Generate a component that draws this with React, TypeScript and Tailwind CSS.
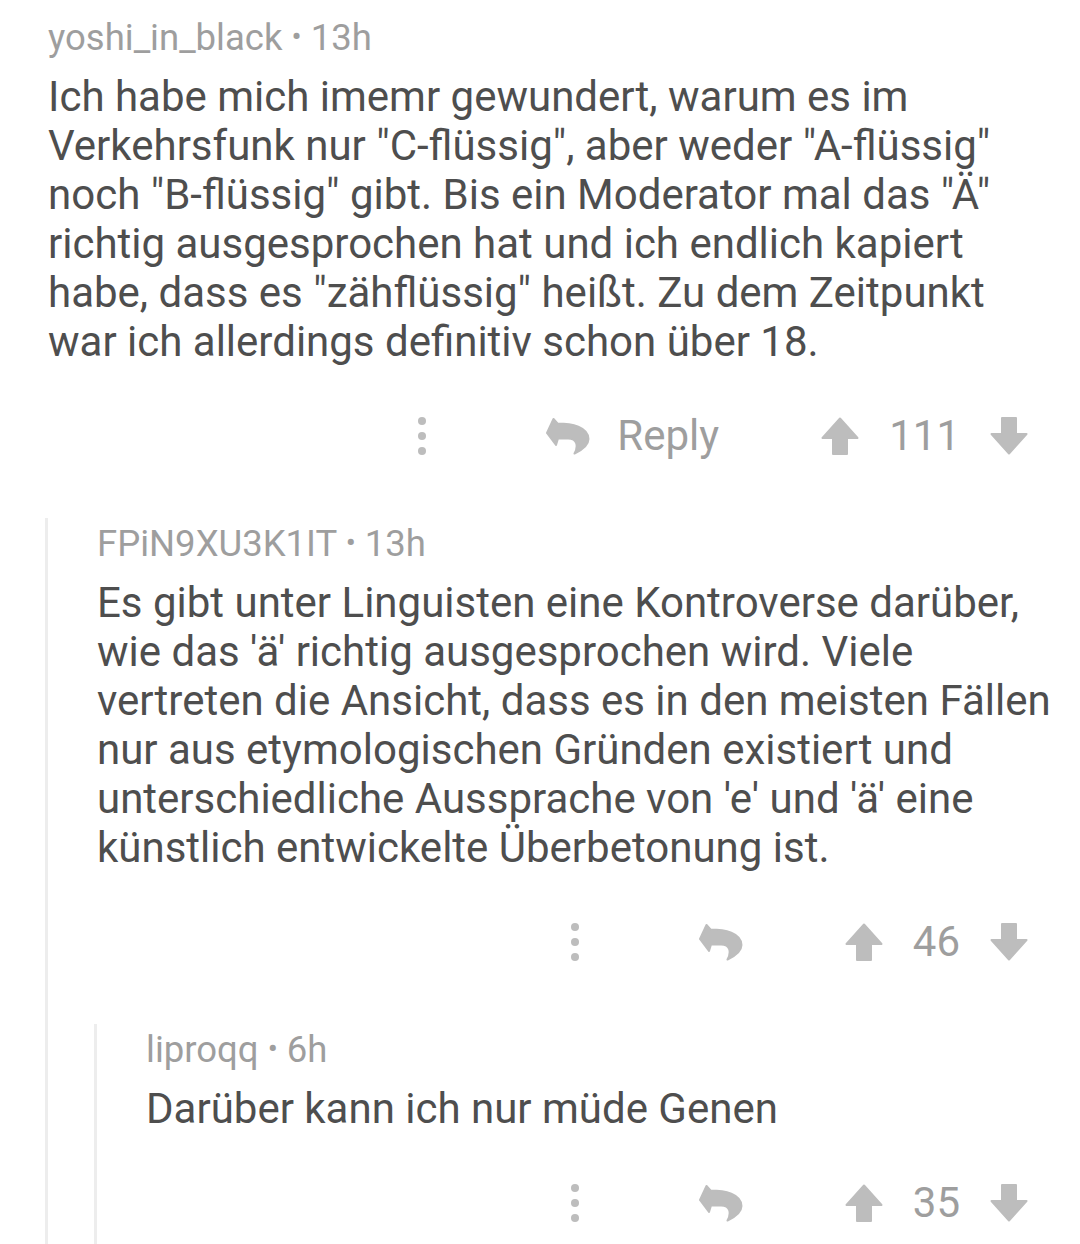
import React from "react";

type Comment = {
  author: string;
  age: string;
  lines: string[];
  score: number;
  replyLabel?: boolean;
  children?: Comment[];
};

const thread: Comment = {
  author: "yoshi_in_black",
  age: "13h",
  lines: [
    "Ich habe mich imemr gewundert, warum es im",
    "Verkehrsfunk nur \"C-flüssig\", aber weder \"A-flüssig\"",
    "noch \"B-flüssig\" gibt. Bis ein Moderator mal das \"Ä\"",
    "richtig ausgesprochen hat und ich endlich kapiert",
    "habe, dass es \"zähflüssig\" heißt. Zu dem Zeitpunkt",
    "war ich allerdings definitiv schon über 18.",
  ],
  score: 111,
  replyLabel: true,
  children: [
    {
      author: "FPiN9XU3K1IT",
      age: "13h",
      lines: [
        "Es gibt unter Linguisten eine Kontroverse darüber,",
        "wie das 'ä' richtig ausgesprochen wird. Viele",
        "vertreten die Ansicht, dass es in den meisten Fällen",
        "nur aus etymologischen Gründen existiert und",
        "unterschiedliche Aussprache von 'e' und 'ä' eine",
        "künstlich entwickelte Überbetonung ist.",
      ],
      score: 46,
      children: [
        {
          author: "liproqq",
          age: "6h",
          lines: ["Darüber kann ich nur müde Genen"],
          score: 35,
        },
      ],
    },
  ],
};

function ReplyIcon() {
  return (
    <svg width="44" height="38" viewBox="0 0 44 38" className="shrink-0">
      <path
        d="M1 16 L7.5 2 L11.5 6.5 C26 6.5 42 10 42.5 22 C42.5 28 36 33 28.5 36.5 C32 30 32 21.5 22 21.5 L12 21.5 L10 28 Z"
        fill="#bdbdbd"
        stroke="#bdbdbd"
        strokeWidth="2"
        strokeLinejoin="round"
      />
    </svg>
  );
}

function ArrowUp() {
  return (
    <svg width="38" height="38" viewBox="0 0 38 38" className="shrink-0">
      <polygon
        points="19,1.5 36.5,21 26,21 26,37 12,37 12,21 1.5,21"
        fill="#bdbdbd"
        stroke="#bdbdbd"
        strokeWidth="2"
        strokeLinejoin="round"
      />
    </svg>
  );
}

function ArrowDown() {
  return (
    <svg width="38" height="38" viewBox="0 0 38 38" className="shrink-0">
      <polygon
        points="19,36.5 36.5,17 26,17 26,1 12,1 12,17 1.5,17"
        fill="#bdbdbd"
        stroke="#bdbdbd"
        strokeWidth="2"
        strokeLinejoin="round"
      />
    </svg>
  );
}

function MoreDots() {
  return (
    <div className="flex flex-col items-center gap-[7px] w-[8px]">
      <span className="block w-[8px] h-[8px] rounded-full bg-[#bdbdbd]" />
      <span className="block w-[8px] h-[8px] rounded-full bg-[#bdbdbd]" />
      <span className="block w-[8px] h-[8px] rounded-full bg-[#bdbdbd]" />
    </div>
  );
}

function CommentItem({ c }: { c: Comment }) {
  return (
    <div>
      <div className="pt-[6px]">
        <div className="h-[40px] leading-[40px] text-[36.5px] text-[#9e9e9e] whitespace-nowrap">
          {c.author} <span className="text-[30px] relative -top-[3px]">•</span> {c.age}
        </div>
        <div className="mt-[14px] text-[42px] leading-[49px] text-[#4e4e4e]">
          {c.lines.map((l, i) => (
            <div key={i} className="whitespace-nowrap">
              {l}
            </div>
          ))}
        </div>
        {/* action row */}
        <div className="mt-[40px] h-[60px] flex items-center justify-end pr-[52px]">
          <MoreDots />
          <div className="ml-[120px] flex items-center">
            <ReplyIcon />
            {c.replyLabel && (
              <span className="ml-[27px] text-[42px] text-[#9e9e9e] leading-none">Reply</span>
            )}
          </div>
          <div className="ml-[102px] flex items-center">
            <ArrowUp />
            <span className="mx-[30px] text-[42px] text-[#9e9e9e] leading-none">{c.score}</span>
            <ArrowDown />
          </div>
        </div>
      </div>
      {c.children && c.children.length > 0 && (
        <div className="mt-[52px] -ml-[3px] border-l-[3px] border-[#ededed] pl-[49px] pb-[40px]">
          {c.children.map((ch, i) => (
            <CommentItem key={i} c={ch} />
          ))}
        </div>
      )}
    </div>
  );
}

export default function App() {
  return (
    <div
      className="w-[1080px] h-[1244px] overflow-hidden bg-white pl-[48px] pt-[12px]"
      style={{ fontFamily: "Roboto, 'Noto Sans', sans-serif" }}
    >
      <CommentItem c={thread} />
    </div>
  );
}
